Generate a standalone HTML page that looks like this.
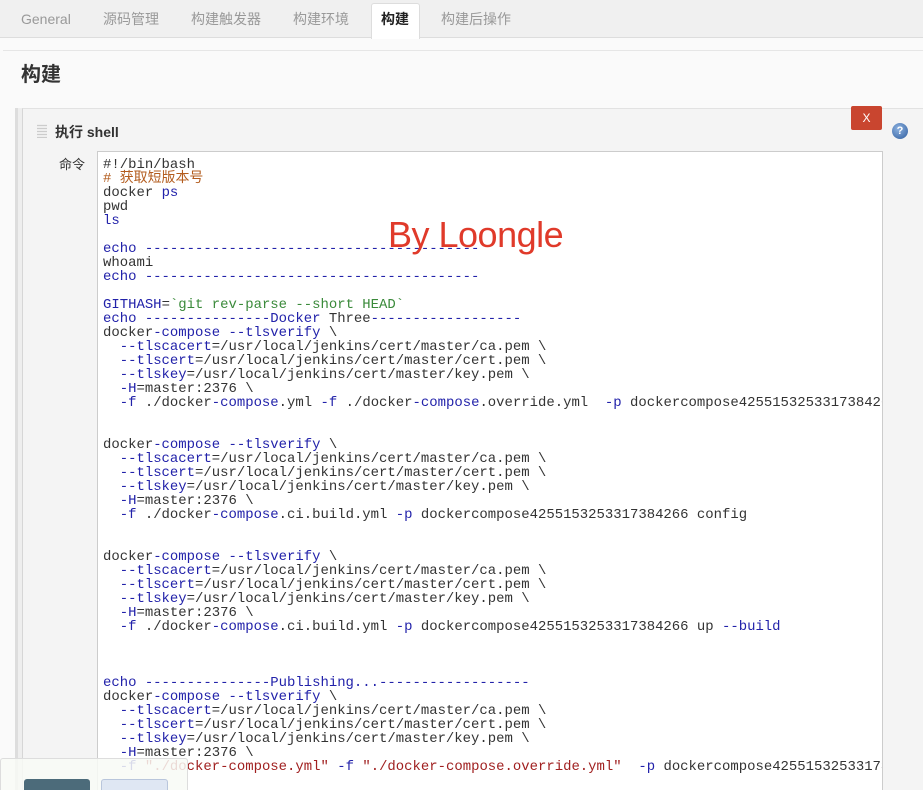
<!DOCTYPE html>
<html style="overflow:hidden;height:790px"><head><meta charset="utf-8"><style>
body{margin:0;width:923px;height:790px;overflow:hidden;background:#fff;font-family:"Liberation Sans","Noto Sans CJK SC",sans-serif;position:relative}
.tabs{position:absolute;left:0;top:0;width:923px;height:37px;background:#f0f0f0;border-bottom:1px solid #ddd}
.tab{position:absolute;top:9px;font-size:14px;color:#999}
.act{position:absolute;left:371px;top:3px;width:47px;height:35px;background:#fff;border:1px solid #ddd;border-bottom:none;border-radius:3px 3px 0 0}
.hl{position:absolute;left:3px;top:50px;width:920px;border-top:1px solid #e6e6e6}
.page{position:absolute;left:0;top:38px;width:923px;height:752px;background:#fafafa}
h1{position:absolute;left:21px;top:58px;margin:0;font-size:20px;font-weight:bold;color:#333}
.outer{position:absolute;left:15px;top:108px;width:908px;height:682px;background:#eee;border-left:3px solid #ddd}
.inner{position:absolute;left:22px;top:108px;width:901px;height:682px;background:#f4f4f4;border-left:1px solid #d6d6d6;border-top:1px solid #e2e2e2}
.ta{position:absolute;left:97px;top:151px;width:784px;height:650px;background:#fff;border:1px solid #ccc;overflow:hidden}
pre{margin:0;position:absolute;left:5px;top:6px;font-family:"Liberation Mono","Noto Sans CJK SC",monospace;font-size:13.95px;line-height:14px;color:#333;white-space:pre}
.b{color:#2222aa}.c{color:#b35c1e}.g{color:#3a8a3a}.r{color:#a02020}
</style></head><body>
<div class="page"></div>
<div class="tabs">
<span class="tab" style="left:21px;top:11px">General</span>
<span class="tab" style="left:103px">源码管理</span>
<span class="tab" style="left:191px">构建触发器</span>
<span class="tab" style="left:293px">构建环境</span>
<div class="act"></div>
<span class="tab" style="left:381px;color:#222;font-weight:bold">构建</span>
<span class="tab" style="left:441px">构建后操作</span>
</div>
<div class="hl"></div>
<h1>构建</h1>
<div class="outer"></div>
<div class="inner"></div>
<div style="position:absolute;left:37px;top:124px;width:10px;height:14px;background:repeating-linear-gradient(0deg,#ccc 0 1px,transparent 1px 3px),#eee"></div>
<div style="position:absolute;left:55px;top:122px;font-size:14px;font-weight:bold;color:#333">执行 shell</div>
<div style="position:absolute;left:851px;top:106px;width:31px;height:24px;background:#c9452f;border-radius:2px;color:#fff;font-size:12px;text-align:center;line-height:24px">X</div>
<div style="position:absolute;left:892px;top:123px;width:16px;height:16px;border-radius:50%;background:radial-gradient(circle at 40% 35%,#8db2e0,#2f5d9e);color:#fff;font-size:11px;font-weight:bold;text-align:center;line-height:16px">?</div>
<div style="position:absolute;left:59px;top:154px;font-size:13px;color:#333">命令</div>
<div class="ta"><pre>#!/bin/bash
<span class="c"># 获取短版本号</span>
docker <span class="b">ps</span>
pwd
<span class="b">ls</span>

<span class="b">echo ----------------------------------------</span>
whoami
<span class="b">echo ----------------------------------------</span>

<span class="b">GITHASH</span>=<span class="g">`git rev-parse --short HEAD`</span>
<span class="b">echo ---------------Docker</span> Three<span class="b">------------------</span>
docker<span class="b">-compose --tlsverify</span> \
  <span class="b">--tlscacert</span>=/usr/local/jenkins/cert/master/ca.pem \
  <span class="b">--tlscert</span>=/usr/local/jenkins/cert/master/cert.pem \
  <span class="b">--tlskey</span>=/usr/local/jenkins/cert/master/key.pem \
  <span class="b">-H</span>=master:2376 \
  <span class="b">-f</span> ./docker<span class="b">-compose</span>.yml <span class="b">-f</span> ./docker<span class="b">-compose</span>.override.yml  <span class="b">-p</span> dockercompose4255153253317384266


docker<span class="b">-compose --tlsverify</span> \
  <span class="b">--tlscacert</span>=/usr/local/jenkins/cert/master/ca.pem \
  <span class="b">--tlscert</span>=/usr/local/jenkins/cert/master/cert.pem \
  <span class="b">--tlskey</span>=/usr/local/jenkins/cert/master/key.pem \
  <span class="b">-H</span>=master:2376 \
  <span class="b">-f</span> ./docker<span class="b">-compose</span>.ci.build.yml <span class="b">-p</span> dockercompose4255153253317384266 config


docker<span class="b">-compose --tlsverify</span> \
  <span class="b">--tlscacert</span>=/usr/local/jenkins/cert/master/ca.pem \
  <span class="b">--tlscert</span>=/usr/local/jenkins/cert/master/cert.pem \
  <span class="b">--tlskey</span>=/usr/local/jenkins/cert/master/key.pem \
  <span class="b">-H</span>=master:2376 \
  <span class="b">-f</span> ./docker<span class="b">-compose</span>.ci.build.yml <span class="b">-p</span> dockercompose4255153253317384266 up <span class="b">--build</span>



<span class="b">echo ---------------Publishing...------------------</span>
docker<span class="b">-compose --tlsverify</span> \
  <span class="b">--tlscacert</span>=/usr/local/jenkins/cert/master/ca.pem \
  <span class="b">--tlscert</span>=/usr/local/jenkins/cert/master/cert.pem \
  <span class="b">--tlskey</span>=/usr/local/jenkins/cert/master/key.pem \
  <span class="b">-H</span>=master:2376 \
  <span class="b">-f</span> <span class="r">"./docker-compose.yml"</span> <span class="b">-f</span> <span class="r">"./docker-compose.override.yml"</span>  <span class="b">-p</span> dockercompose4255153253317384266</pre></div>
<div style="position:absolute;left:388px;top:214px;font-size:36px;color:#e03a2a;letter-spacing:-0.5px">By Loongle</div>
<div style="position:absolute;left:0;top:758px;width:186px;height:40px;background:rgba(248,250,246,0.85);border:1px solid #ddd;border-radius:3px"></div>
<div style="position:absolute;left:24px;top:779px;width:66px;height:20px;background:#4c6b7a;border-radius:3px"></div>
<div style="position:absolute;left:101px;top:779px;width:65px;height:20px;background:#dfe7f3;border:1px solid #b9c6dc;border-radius:3px"></div>
</body></html>
